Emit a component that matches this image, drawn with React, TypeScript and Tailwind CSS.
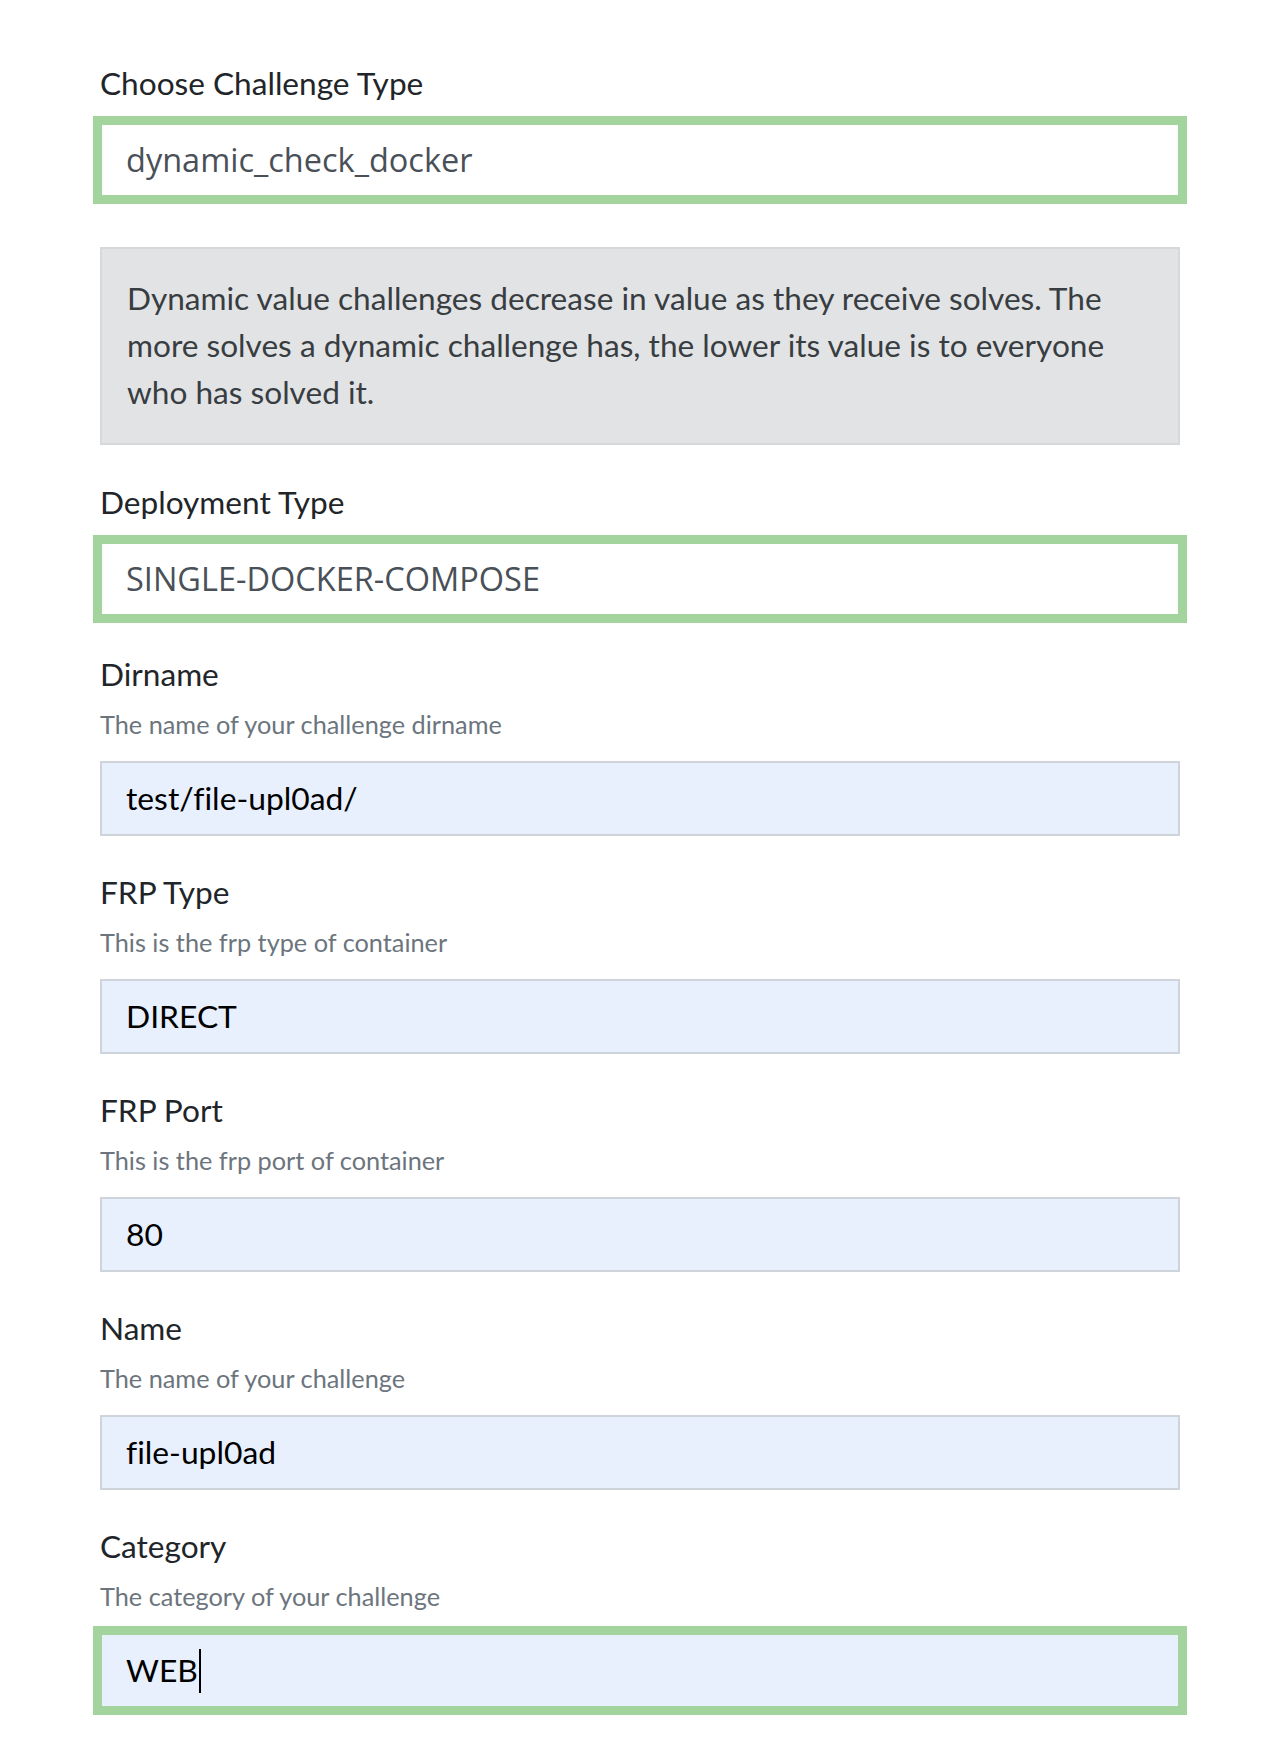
import React from "react";

type Field = {
  label: string;
  help: string;
  value: string;
  focused?: boolean;
};

const FIELDS: Field[] = [
  { label: "Dirname", help: "The name of your challenge dirname", value: "test/file-upl0ad/" },
  { label: "FRP Type", help: "This is the frp type of container", value: "DIRECT" },
  { label: "FRP Port", help: "This is the frp port of container", value: "80" },
  { label: "Name", help: "The name of your challenge", value: "file-upl0ad" },
  { label: "Category", help: "The category of your challenge", value: "WEB", focused: true },
];

function SelectBox({ value, className = "" }: { value: string; className?: string }) {
  return (
    <div
      className={`flex h-[74px] items-center border-2 border-[#a3d49d] bg-white pl-[24px] text-[32.5px] text-[#495057] shadow-[0_0_0_7px_#a3d49d] [font-family:'Open_Sans',sans-serif] ${className}`}
    >
      {value}
    </div>
  );
}

function TextField({ field, first }: { field: Field; first: boolean }) {
  return (
    <div className={first ? "mt-[35px]" : "mt-[33px]"}>
      <div className="text-[31.6px] leading-[46px] text-[#212529]">{field.label}</div>
      <div className="mt-[9px] text-[25.3px] leading-[37px] text-[#6c757d]">{field.help}</div>
      <div
        className={`mt-[18px] flex h-[75px] items-center bg-[#e8f0fe] pl-[24px] text-[31.8px] text-black ${
          field.focused
            ? "border-2 border-[#a3d49d] shadow-[0_0_0_7px_#a3d49d]"
            : "border-2 border-[#cfd4da]"
        }`}
      >
        <span>{field.value}</span>
        {field.focused && <span className="ml-[1px] inline-block h-[44px] w-[2px] bg-black" />}
      </div>
    </div>
  );
}

export default function App() {
  return (
    <div className="min-h-screen bg-white [font-family:Lato,'Liberation_Sans',sans-serif] [font-variant-ligatures:none]">
      <div className="ml-[100px] w-[1080px] pt-[60px] pb-[30px]">
        {/* Challenge type */}
        <div className="text-[31.6px] leading-[46px] text-[#212529]">Choose Challenge Type</div>
        <SelectBox value="dynamic_check_docker" className="mt-[17px]" />

        {/* Description */}
        <div className="mt-[50px] h-[198px] border-2 border-[#d6d8db] bg-[#e2e3e5] px-[25px] pt-[26px] text-[31.6px] leading-[47px] text-[#383d41]">
          <div className="whitespace-nowrap">
            Dynamic value challenges decrease in value as they receive solves. The
          </div>
          <div className="whitespace-nowrap">
            more solves a dynamic challenge has, the lower its value is to everyone
          </div>
          <div className="whitespace-nowrap">who has solved it.</div>
        </div>

        {/* Deployment type */}
        <div className="mt-[34px] text-[31.6px] leading-[46px] text-[#212529]">Deployment Type</div>
        <SelectBox value="SINGLE-DOCKER-COMPOSE" className="mt-[17px]" />

        {FIELDS.map((f, i) => (
          <TextField key={f.label} field={f} first={i === 0} />
        ))}
      </div>
    </div>
  );
}
